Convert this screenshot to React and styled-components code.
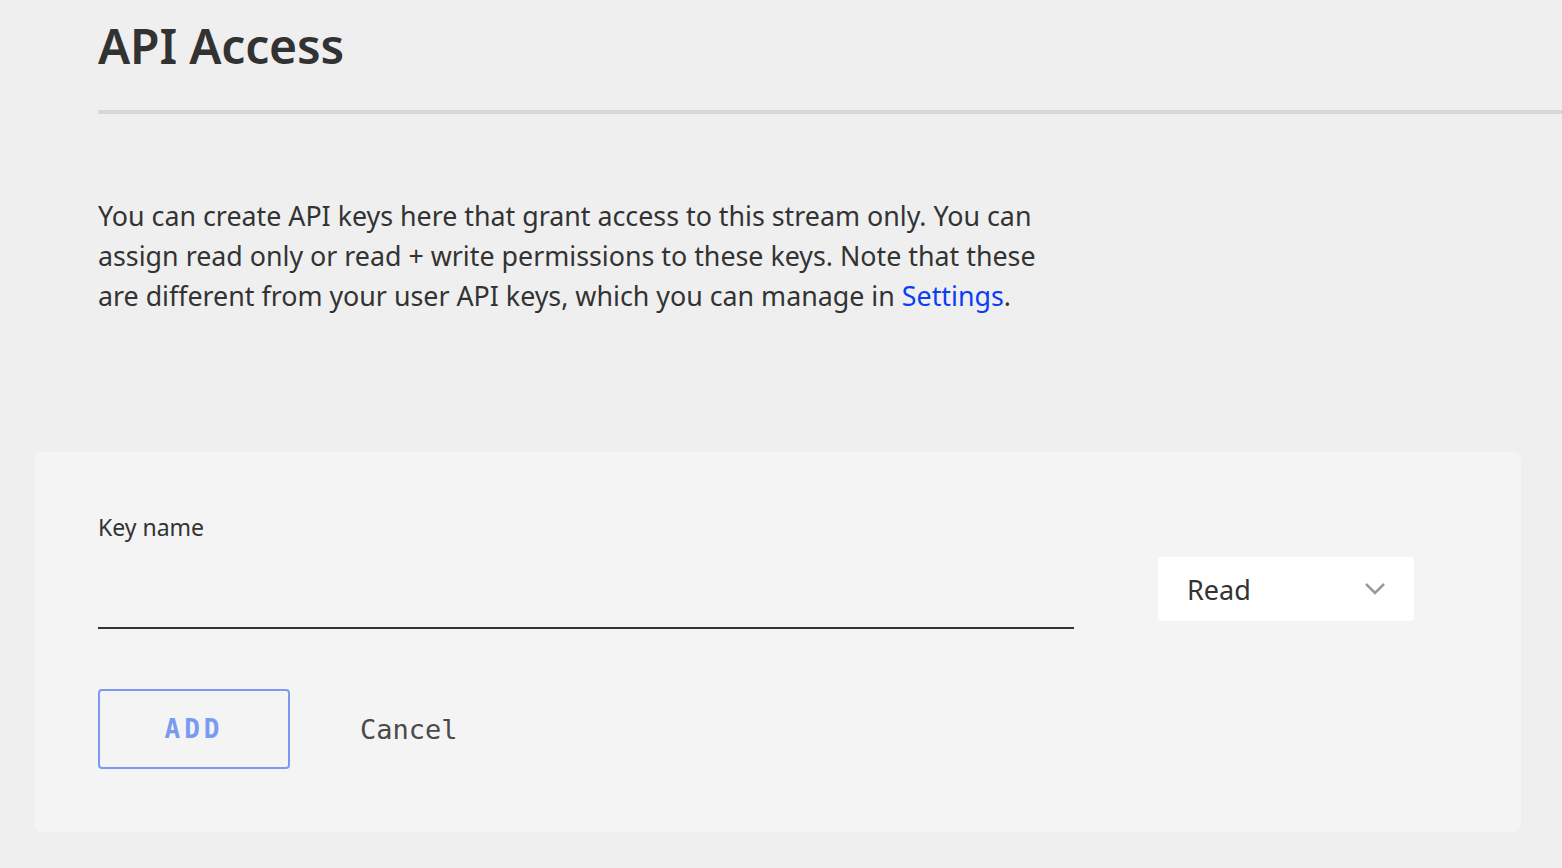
import React from "react";
import styled, { createGlobalStyle } from "styled-components";

const Global = createGlobalStyle`
  html, body { margin: 0; padding: 0; background: #efefef; }
  body { font-family: "Noto Sans", "Open Sans", sans-serif; color: #333; }
  * { box-sizing: border-box; }
`;

const Page = styled.div`
  width: 1562px;
  min-height: 868px;
  background: #efefef;
  padding-top: 14px;
`;

const Header = styled.header`
  margin-left: 98px;
`;

const Title = styled.h1`
  margin: 0;
  font-size: 48px;
  line-height: 64px;
  font-weight: 600;
  color: #323232;
  letter-spacing: -0.2px;
`;

const Divider = styled.div`
  margin-top: 32px;
  height: 4px;
  background: #d8d8d8;
`;

const Intro = styled.p`
  margin: 82px 0 0 98px;
  width: 965px;
  font-size: 26.8px;
  line-height: 40px;
  color: #333;
`;

const Link = styled.a`
  color: #0b3ef5;
  text-decoration: none;
`;

const Panel = styled.section`
  margin: 136px 41px 0 34px;
  height: 380px;
  background: #f4f4f4;
  border-radius: 8px;
  padding: 60px 64px 0 64px;
`;

const FieldRow = styled.div`
  display: flex;
  align-items: flex-end;
  gap: 84px;
`;

const Field = styled.label`
  display: flex;
  flex-direction: column;
  width: 976px;
`;

const Label = styled.span`
  font-size: 23px;
  line-height: 30px;
  color: #333;
`;

const Input = styled.input`
  margin-top: 23px;
  height: 64px;
  border: none;
  border-bottom: 2px solid #333;
  background: transparent;
  font: inherit;
  font-size: 25px;
  outline: none;
`;

const Select = styled.div`
  width: 256px;
  height: 64px;
  margin-bottom: 8px;
  background: #fff;
  border-radius: 4px;
  display: flex;
  align-items: center;
  justify-content: space-between;
  padding: 0 28px 0 29px;
  font-size: 27px;
  color: #333;
`;

const Actions = styled.div`
  display: flex;
  align-items: center;
  gap: 70px;
  margin-top: 60px;
`;

const AddButton = styled.button`
  width: 192px;
  height: 80px;
  border: 2px solid #7b9af0;
  border-radius: 4px;
  background: transparent;
  color: #7b9af0;
  font-family: "DejaVu Sans Mono", "Liberation Mono", monospace;
  font-weight: bold;
  font-size: 26px;
  letter-spacing: 4px;
`;

const CancelButton = styled.button`
  border: none;
  background: transparent;
  padding: 0;
  color: #4a4a4a;
  font-family: "DejaVu Sans Mono", "Liberation Mono", monospace;
  font-size: 27px;
`;

const Chevron = () => (
  <svg width="22" height="14" viewBox="0 0 22 14" fill="none">
    <path d="M2 2 L11 11 L20 2" stroke="#999" strokeWidth="2.5" />
  </svg>
);

export default function App() {
  return (
    <Page>
      <Global />
      <Header>
        <Title>API Access</Title>
        <Divider />
      </Header>
      <Intro>
        You can create API keys here that grant access to this stream only. You can
        assign read only or read + write permissions to these keys. Note that these
        are different from your user API keys, which you can manage in{" "}
        <Link href="#">Settings</Link>.
      </Intro>
      <Panel>
        <FieldRow>
          <Field>
            <Label>Key name</Label>
            <Input />
          </Field>
          <Select>
            <span>Read</span>
            <Chevron />
          </Select>
        </FieldRow>
        <Actions>
          <AddButton>ADD</AddButton>
          <CancelButton>Cancel</CancelButton>
        </Actions>
      </Panel>
    </Page>
  );
}
